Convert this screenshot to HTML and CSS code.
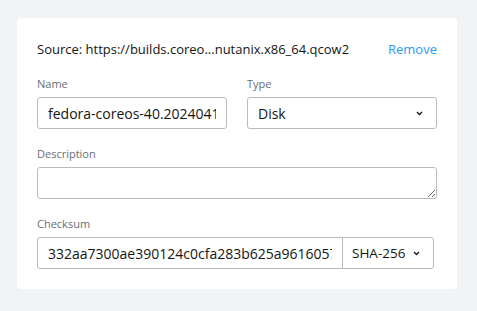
FILE: index.html
```html
<!DOCTYPE html>
<html lang="en">
<head>
    <meta charset="UTF-8">
    <meta name="viewport" content="width=device-width, initial-scale=1.0">
    <title>Image source</title>
    <link rel="stylesheet" href="styles.css">
</head>
<body>
    <div class="card">
        <div class="source-row">
            <span class="source">Source: https://builds.coreo...nutanix.x86_64.qcow2</span>
            <a class="remove" href="#">Remove</a>
        </div>

        <div class="form-row">
            <div class="field">
                <label class="label">Name</label>
                <input class="input" type="text" value="fedora-coreos-40.20240416.3.1-nutanix.x86_64">
            </div>
            <div class="field">
                <label class="label">Type</label>
                <div class="select">
                    <span>Disk</span>
                    <svg class="chevron" width="7" height="5" viewBox="0 0 7 5"><path d="M1 1l2.5 2.5L6 1" fill="none" stroke="#151515" stroke-width="1.3"/></svg>
                </div>
            </div>
        </div>

        <div class="field">
            <label class="label">Description</label>
            <textarea class="textarea"></textarea>
        </div>

        <div class="field">
            <label class="label">Checksum</label>
            <div class="input-group">
                <input class="input checksum" type="text" value="332aa7300ae390124c0cfa283b625a96160579b1cd9a1c4f">
                <div class="select algo">
                    <span>SHA-256</span>
                    <svg class="chevron" width="7" height="5" viewBox="0 0 7 5"><path d="M1 1l2.5 2.5L6 1" fill="none" stroke="#151515" stroke-width="1.3"/></svg>
                </div>
            </div>
        </div>
    </div>
</body>
</html>
```
FILE: styles.css
```css
body {
    margin: 0;
    padding: 18px 20px 22px 17px;
    background-color: #f2f3f5;
    font-family: "Open Sans", Arial, sans-serif;
    color: #151515;
}
.card {
    width: 400px;
    background-color: #fff;
    border-radius: 4px;
    padding: 20px 20px 20px 20px;
    display: flex;
    flex-direction: column;
    gap: 18px;
}
.source-row {
    display: flex;
    justify-content: space-between;
    align-items: center;
    font-size: 13px;
    height: 20px;
    margin-top: 1px;
}
.remove {
    color: #2b9af3;
    text-decoration: none;
}
.form-row {
    display: grid;
    grid-template-columns: 190px 190px;
    gap: 20px;
}
.field {
    display: flex;
    flex-direction: column;
    gap: 6px;
}
.label {
    font-size: 11px;
    color: #6a6e73;
    line-height: 14px;
}
.input, .select, .textarea {
    box-sizing: border-box;
    height: 32px;
    border: 1px solid #b8bbbe;
    border-radius: 3px;
    font-family: inherit;
    font-size: 14px;
    color: #151515;
    background-color: #fff;
}
.input {
    padding: 0 10px;
    width: 100%;
}
.select {
    display: flex;
    align-items: center;
    justify-content: space-between;
    padding: 0 13px 0 10px;
}
.textarea {
    width: 100%;
    height: 32px;
    resize: vertical;
    display: block;
}
.input-group {
    display: flex;
    width: 397px;
}
.input-group .checksum {
    flex: 1;
    min-width: 0;
    border-radius: 3px 0 0 3px;
}
.input-group .algo {
    flex: 0 0 92px;
    margin-left: -1px;
    border-radius: 0 3px 3px 0;
    padding: 0 13px 0 9px;
    font-size: 13.5px;
}
```
